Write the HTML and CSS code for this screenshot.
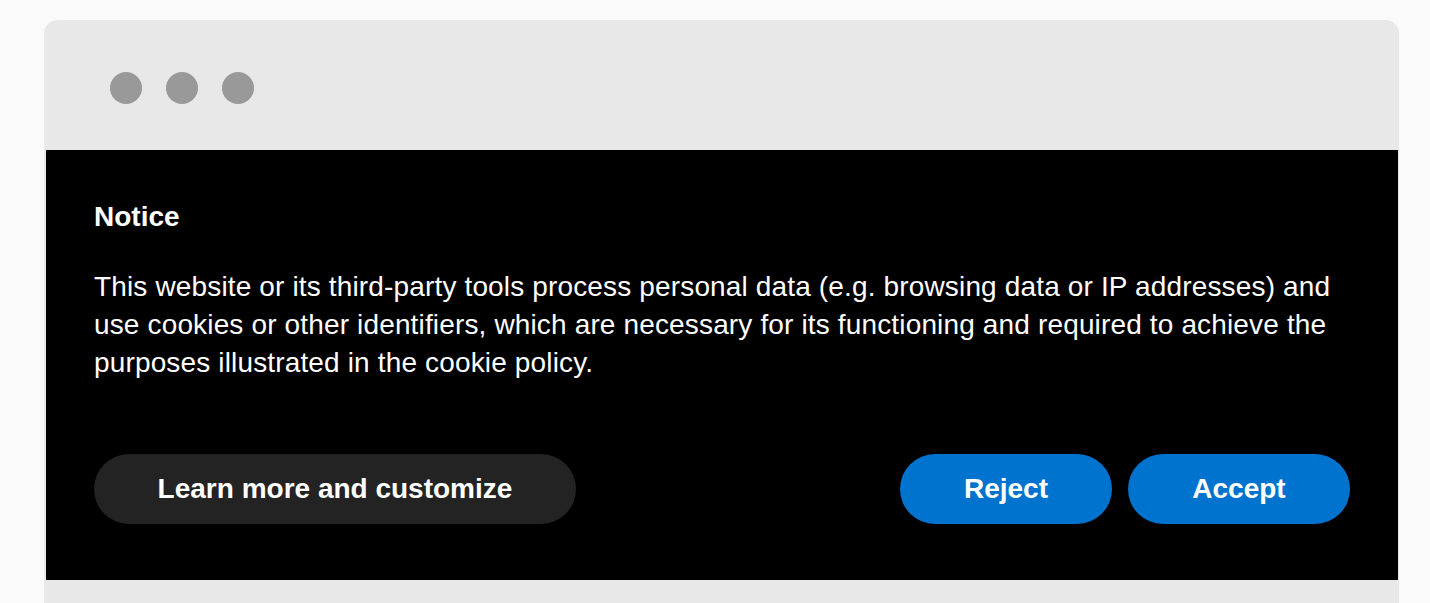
FILE: index.html
```html
<!DOCTYPE html>
<html lang="en">
<head>
    <meta charset="UTF-8">
    <meta name="viewport" content="width=device-width, initial-scale=1.0">
    <title>Cookie Notice</title>
    <link rel="stylesheet" href="styles.css">
</head>
<body>
    <div class="window">
        <div class="title-bar">
            <span class="dot"></span>
            <span class="dot"></span>
            <span class="dot"></span>
        </div>

        <div class="notice">
            <h2 class="notice-title">Notice</h2>
            <p class="notice-text">This website or its third-party tools process personal data (e.g. browsing data or IP addresses) and use cookies or other identifiers, which are necessary for its functioning and required to achieve the purposes illustrated in the cookie policy.</p>

            <div class="notice-buttons">
                <button class="btn btn-dark">Learn more and customize</button>
                <div class="btn-group">
                    <button class="btn btn-blue btn-reject">Reject</button>
                    <button class="btn btn-blue btn-accept">Accept</button>
                </div>
            </div>
        </div>

        <div class="window-bottom"></div>
    </div>
</body>
</html>
```

FILE: styles.css
```css
body {
    margin: 0;
    background: #fafafa;
    font-family: "Liberation Sans", Arial, sans-serif;
    overflow: hidden;
}

.window {
    margin: 20px 0 0 44px;
    width: 1355px;
    background-color: #e8e8e8;
    border-radius: 14px 14px 0 0;
    padding: 0 1px 0 2px;
    box-sizing: border-box;
}

.title-bar {
    height: 130px;
    box-sizing: border-box;
    display: flex;
    gap: 24px;
    padding: 52px 0 0 64px;
}

.dot {
    width: 32px;
    height: 32px;
    border-radius: 50%;
    background-color: #999;
}

.notice {
    background-color: #000;
    color: #fff;
    padding: 52px 48px 56px 48px;
}

.notice-title {
    margin: 0;
    font-size: 28px;
    line-height: 30px;
    font-weight: bold;
}

.notice-text {
    margin: 36px 0 0 0;
    font-size: 28px;
    line-height: 38px;
    letter-spacing: 0.15px;
}

.notice-buttons {
    margin-top: 72px;
    display: flex;
    justify-content: space-between;
    align-items: center;
}

.btn-group {
    display: flex;
    gap: 16px;
}

.btn {
    height: 70px;
    border: none;
    border-radius: 35px;
    color: #fff;
    font-family: "Liberation Sans", Arial, sans-serif;
    font-size: 28px;
    font-weight: bold;
    cursor: pointer;
}

.btn-dark {
    width: 482px;
    background-color: #232323;
}

.btn-blue {
    background-color: #0073cf;
}

.btn-reject {
    width: 212px;
}

.btn-accept {
    width: 222px;
}

.window-bottom {
    height: 23px;
}
```
